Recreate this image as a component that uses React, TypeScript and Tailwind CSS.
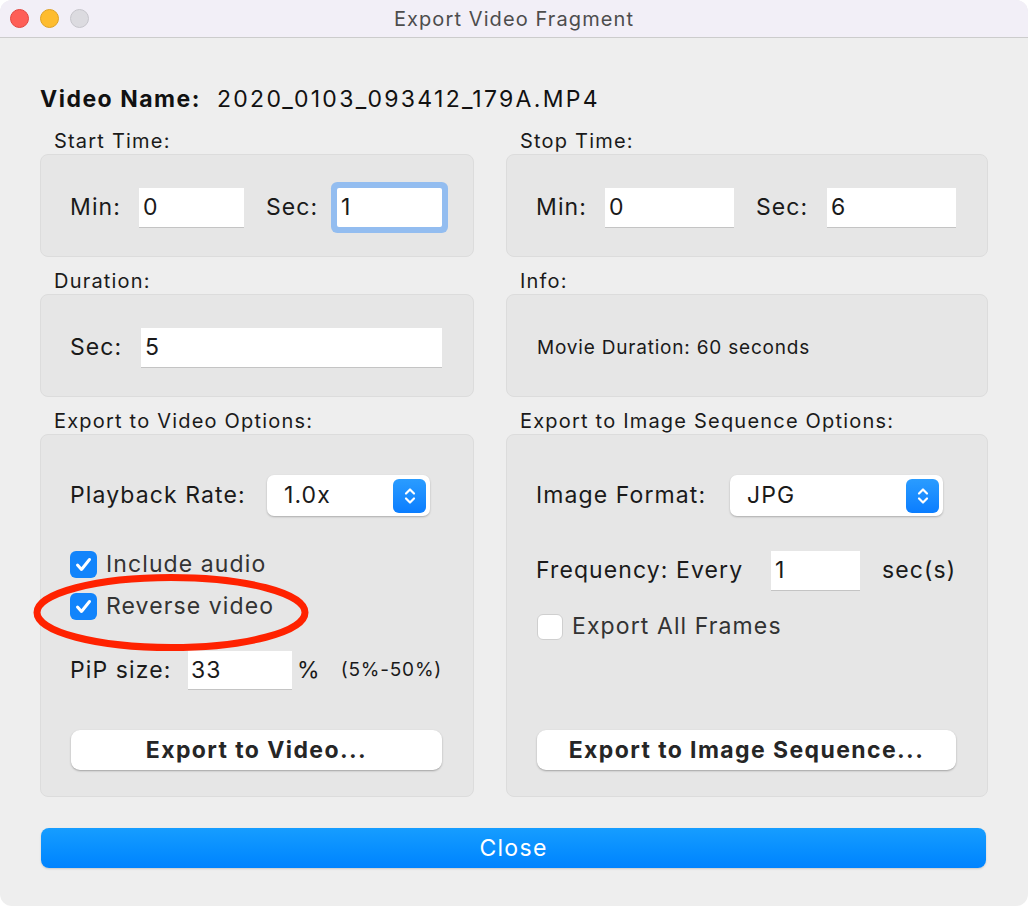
import React from "react";

const font = { fontFamily: "Inter, 'Noto Sans', sans-serif" };
const T = "text-[23px] tracking-[1.1px] text-[#1a1a1a]";

function Field({ value, w, focused }: { value: string; w: string; focused?: boolean }) {
  return (
    <div
      className={`${w} h-[39px] bg-white flex items-center pl-[4px] ${T} shadow-[0_1px_0_#c4c4c4] ${
        focused ? "ring-[6px] ring-[#93bdf0] rounded-[2px]" : ""
      }`}
    >
      {value}
    </div>
  );
}

function Group({ label, h, children, className = "" }: { label: string; h: string; children: React.ReactNode; className?: string }) {
  return (
    <div className="flex flex-col">
      <div className="pl-[14px] text-[20px] tracking-[1.2px] leading-[20px] text-[#1a1a1a] mb-[3px]">{label}</div>
      <div className={`${h} rounded-[8px] bg-[#e6e6e6] border border-[#dcdcdc] ${className}`}>{children}</div>
    </div>
  );
}

function Stepper() {
  return (
    <div className="w-[33px] h-[34px] rounded-[6px] bg-gradient-to-b from-[#2a9cff] to-[#0a7dff] flex items-center justify-center">
      <svg width="16" height="24" viewBox="0 0 16 24" fill="none" stroke="white" strokeWidth="2.2" strokeLinecap="round" strokeLinejoin="round">
        <path d="M4 9.5 L8 5.5 L12 9.5" />
        <path d="M4 14.5 L8 18.5 L12 14.5" />
      </svg>
    </div>
  );
}

function Select({ value, w }: { value: string; w: string }) {
  return (
    <div className={`${w} h-[41px] bg-white rounded-[7px] shadow-[0_1px_2px_rgba(0,0,0,0.25)] flex items-center justify-between pl-[17px] pr-[4px]`}>
      <span className={T}>{value}</span>
      <Stepper />
    </div>
  );
}

function Check({ checked, label }: { checked: boolean; label: string }) {
  return (
    <div className="flex items-center h-[27px]">
      {checked ? (
        <div className="w-[27px] h-[27px] rounded-[6px] bg-[#1284fb] flex items-center justify-center">
          <svg width="19" height="19" viewBox="0 0 19 19" fill="none" stroke="white" strokeWidth="3" strokeLinecap="round" strokeLinejoin="round">
            <path d="M3.5 10 L7.5 14.5 L15.5 4.5" />
          </svg>
        </div>
      ) : (
        <div className="w-[26px] h-[26px] rounded-[6px] bg-white border border-[#cfcfcf]" />
      )}
      <span className="ml-[9px] text-[23px] tracking-[1.1px] text-[#333333]">{label}</span>
    </div>
  );
}

function Button({ label, w }: { label: string; w: string }) {
  return (
    <div className={`${w} h-[40px] bg-white rounded-[9px] shadow-[0_1px_2px_rgba(0,0,0,0.3)] flex items-center justify-center text-[23px] tracking-[1.4px] font-bold text-[#262626]`}>
      {label}
    </div>
  );
}

export default function App() {
  return (
    <div className="w-[1028px] h-[906px] bg-white" style={font}>
      <div className="relative w-full h-full rounded-[12px] overflow-hidden bg-[#eeeeee] flex flex-col">
        {/* title bar */}
        <div className="h-[38px] bg-[#f2eff7] border-b border-[#cccccc] flex items-center relative">
          <div className="flex gap-[11px] pl-[10px]">
            <div className="w-[19px] h-[19px] rounded-full bg-[#fe5f57] border border-[#e2463f]" />
            <div className="w-[19px] h-[19px] rounded-full bg-[#febc2e] border border-[#dea123]" />
            <div className="w-[19px] h-[19px] rounded-full bg-[#dcdbe0] border border-[#c6c5cb]" />
          </div>
          <div className="absolute inset-0 flex items-center justify-center text-[20px] tracking-[1.1px] text-[#4d4d4d]">Export Video Fragment</div>
        </div>

        <div className="px-[40px] pt-[47px] flex flex-col">
          <div className="h-[28px] flex items-center text-[23px] text-[#111111]">
            <span className="font-bold tracking-[1.5px]">Video Name:</span>
            <span className="ml-[16px] tracking-[2.3px]">2020_0103_093412_179A.MP4</span>
          </div>

          <div className="mt-[18px] grid grid-cols-[434px_482px] gap-x-[32px] gap-y-[14px]">
            <Group label="Start Time:" h="h-[103px]" className="flex items-center pl-[29px] pt-[3px]">
              <span className={`w-[69px] ${T}`}>Min:</span>
              <Field value="0" w="w-[105px]" />
              <span className={`ml-[22px] w-[71px] ${T}`}>Sec:</span>
              <Field value="1" w="w-[105px]" focused />
            </Group>
            <Group label="Stop Time:" h="h-[103px]" className="flex items-center pl-[29px] pt-[3px]">
              <span className={`w-[69px] ${T}`}>Min:</span>
              <Field value="0" w="w-[129px]" />
              <span className={`ml-[22px] w-[71px] ${T}`}>Sec:</span>
              <Field value="6" w="w-[129px]" />
            </Group>

            <Group label="Duration:" h="h-[103px]" className="flex items-center pl-[29px] pt-[3px]">
              <span className={`w-[71px] ${T}`}>Sec:</span>
              <Field value="5" w="w-[301px]" />
            </Group>
            <Group label="Info:" h="h-[103px]" className="flex items-center pl-[30px] pt-[5px]">
              <span className="text-[19px] text-[#1a1a1a] tracking-[0.8px]">Movie Duration: 60 seconds</span>
            </Group>

            <Group label="Export to Video Options:" h="h-[363px]" className="flex flex-col pt-[40px] pl-[29px] pb-[26px]">
              <div className="flex items-center">
                <span className={`w-[197px] ${T}`}>Playback Rate:</span>
                <Select value="1.0x" w="w-[163px]" />
              </div>
              <div className="mt-[35px]">
                <Check checked label="Include audio" />
              </div>
              <div className="mt-[15px]">
                <Check checked label="Reverse video" />
              </div>
              <div className="mt-[31px] flex items-center">
                <span className={`w-[118px] ${T}`}>PiP size:</span>
                <div className={`h-[38px] w-[104px] bg-white flex items-center pl-[3px] ${T} shadow-[0_1px_0_#c4c4c4]`}>33</div>
                <span className={`ml-[5px] ${T}`}>%</span>
                <span className="ml-[20px] text-[19px] text-[#1a1a1a] tracking-[0.8px]">(5%-50%)</span>
              </div>
              <div className="mt-auto pl-[1px]">
                <Button label="Export to Video..." w="w-[371px]" />
              </div>
            </Group>

            <Group label="Export to Image Sequence Options:" h="h-[363px]" className="flex flex-col pt-[40px] pl-[29px] pb-[26px]">
              <div className="flex items-center">
                <span className={`w-[194px] ${T}`}>Image Format:</span>
                <Select value="JPG" w="w-[213px]" />
              </div>
              <div className="mt-[35px] flex items-center">
                <span className={`w-[235px] ${T}`}>Frequency: Every</span>
                <Field value="1" w="w-[89px]" />
                <span className={`ml-[22px] ${T}`}>sec(s)</span>
              </div>
              <div className="mt-[23px] pl-[1px]">
                <Check checked={false} label="Export All Frames" />
              </div>
              <div className="mt-auto pl-[1px]">
                <Button label="Export to Image Sequence..." w="w-[419px]" />
              </div>
            </Group>
          </div>

          <div className="mt-[31px] ml-[1px] w-[945px] h-[40px] rounded-[8px] bg-gradient-to-b from-[#169dff] to-[#0083ff] shadow-[0_1px_2px_rgba(0,0,0,0.15)] flex items-center justify-center text-[23px] tracking-[1.3px] text-white">
            Close
          </div>
        </div>

        {/* annotation */}
        <svg className="absolute left-[30px] top-[570px]" width="284" height="86" viewBox="0 0 284 86" fill="none">
          <ellipse cx="141" cy="42.5" rx="134" ry="35" stroke="#ff2200" strokeWidth="7" />
        </svg>
      </div>
    </div>
  );
}
